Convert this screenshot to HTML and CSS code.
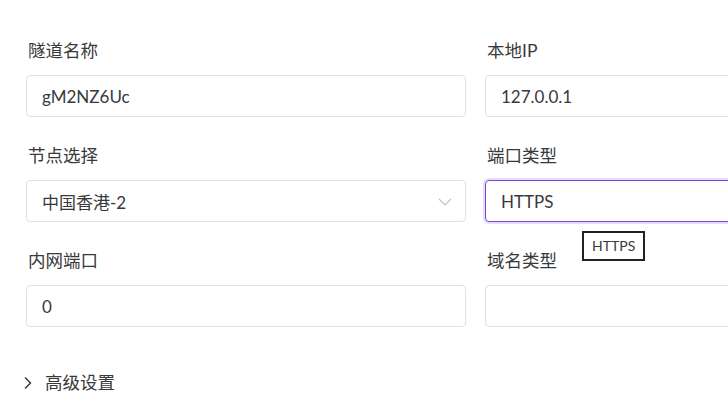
FILE: index.html
```html
<!DOCTYPE html>
<html>
<head>
<meta charset="utf-8">
<link rel="stylesheet" href="styles.css">
</head>
<body>

<div class="tunnelForm">
    <div class="formGrid">
        <div class="formItem">
            <label class="formLabel">隧道名称</label>
            <div class="formInput">gM2NZ6Uc</div>
        </div>
        <div class="formItem">
            <label class="formLabel">本地IP</label>
            <div class="formInput">127.0.0.1</div>
        </div>
        <div class="formItem">
            <label class="formLabel">节点选择</label>
            <div class="formInput formSelect">
                <span>中国香港-2</span>
                <svg class="selectArrow" width="14" height="8" viewBox="0 0 14 8">
                    <path d="M1 1 L7 7 L13 1" fill="none" stroke="#c2c2c6" stroke-width="1.2"/>
                </svg>
            </div>
        </div>
        <div class="formItem">
            <label class="formLabel">端口类型</label>
            <div class="formInput formFocused">HTTPS</div>
            <div class="formTooltip">HTTPS</div>
        </div>
        <div class="formItem">
            <label class="formLabel">内网端口</label>
            <div class="formInput">0</div>
        </div>
        <div class="formItem">
            <label class="formLabel">域名类型</label>
            <div class="formInput"></div>
        </div>
    </div>

    <div class="formAdvanced">
        <svg class="advancedArrow" width="10" height="14" viewBox="0 0 10 14">
            <path d="M2 1.5 L7.5 7 L2 12.5" fill="none" stroke="#333" stroke-width="1.4"/>
        </svg>
        <span>高级设置</span>
    </div>
</div>

</body>
</html>
```

FILE: styles.css
```css
body {
    margin: 0;
    background-color: white;
    font-family: Lato, "Noto Sans CJK SC", sans-serif;
    color: #38393b;
    overflow: hidden;
}

.tunnelForm {
    padding: 39px 0 0 26px;
    width: 899px;
}

.formGrid {
    display: grid;
    grid-template-columns: 440px 440px;
    column-gap: 19px;
    row-gap: 27px;
}

.formItem {
    position: relative;
    display: flex;
    flex-direction: column;
    row-gap: 12px;
}

.formLabel {
    font-size: 17.5px;
    line-height: 24px;
    padding-left: 2px;
}

.formInput {
    box-sizing: border-box;
    height: 42px;
    border: 1px solid #e0e0e6;
    border-radius: 4px;
    padding: 0 15px;
    font-size: 17px;
    display: flex;
    align-items: center;
}

.formSelect {
    justify-content: space-between;
    padding-right: 13px;
}

.selectArrow {
    margin-top: 2px;
}

.formFocused {
    border: 1.5px solid #7f3fd9;
    box-shadow: 0 0 0 2px #e6dcf7;
}

.formTooltip {
    position: absolute;
    left: 97px;
    top: 87px;
    border: 2px solid #222;
    background: white;
    font-size: 14px;
    line-height: 26px;
    padding: 0 8px;
    z-index: 10;
}

.formAdvanced {
    margin-top: 44px;
    display: flex;
    align-items: center;
    column-gap: 12px;
    margin-left: -3px;
    font-size: 17.5px;
    line-height: 24px;
}
```
